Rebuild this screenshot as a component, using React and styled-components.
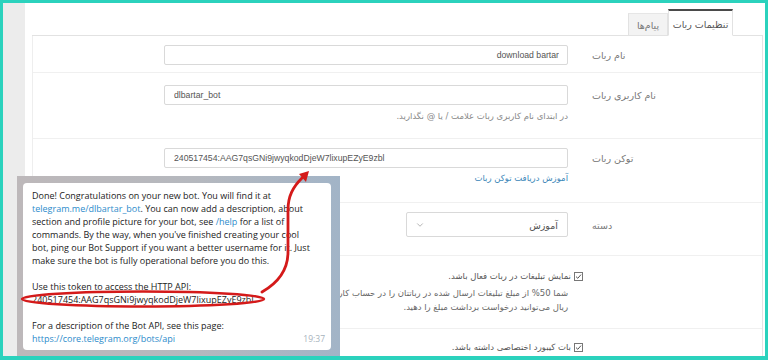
import styled, { createGlobalStyle } from "styled-components";
import { ChevronDown } from "lucide-react";

const GlobalStyle = createGlobalStyle`
  html, body {
    margin: 0;
    padding: 0;
    background: #fff;
  }
  body {
    width: 768px;
    height: 360px;
    overflow: hidden;
  }
`;

const Frame = styled.div`
  position: relative;
  box-sizing: border-box;
  width: 768px;
  height: 360px;
  display: flex;
  border: 3px solid #2bd2bd;
  border-bottom-width: 4px;
  overflow: hidden;
  background: #fff;
`;

const Sidebar = styled.div`
  width: 22px;
  flex-shrink: 0;
  background: #ececec;
`;

const Main = styled.div`
  flex: 1;
  min-width: 0;
  display: flex;
  flex-direction: column;
  padding: 6px 2px 0 7px;
`;

const Tabs = styled.div`
  direction: rtl;
  display: flex;
  align-items: flex-end;
  height: 26px;
  padding-right: 30px;
  border-bottom: 1px solid #e2e2e2;
`;

const Tab = styled.div`
  box-sizing: border-box;
  width: ${(p) => p.w}px;
  height: ${(p) => (p.active ? 27 : 23)}px;
  margin-bottom: -1px;
  display: flex;
  align-items: center;
  justify-content: center;
  padding-top: 2px;
  font: 9.5px "DejaVu Sans", sans-serif;
  color: ${(p) => (p.active ? "#555" : "#777")};
  background: ${(p) => (p.active ? "#fff" : "#f3f3f3")};
  border: 1px solid #e2e2e2;
  border-top: ${(p) => (p.active ? "2px solid #4a4a4a" : "1px solid #e6e6e6")};
  border-bottom-color: ${(p) => (p.active ? "#fff" : "#e2e2e2")};
`;

const Body = styled.div`
  direction: rtl;
  flex: 1;
  border-left: 1px solid #eee;
  border-right: 1px solid #e4e4e4;
`;

const Row = styled.div`
  display: flex;
  align-items: flex-start;
  gap: 12px;
  padding: ${(p) => p.pad};
  border-top: ${(p) => (p.first ? "none" : "1px solid #f0f0f0")};
`;

const Label = styled.div`
  box-sizing: border-box;
  width: 182px;
  flex-shrink: 0;
  padding: 1px 0 0 12px;
  text-align: left;
  font: 9.5px "DejaVu Sans", sans-serif;
  height: ${(p) => p.h || 20}px;
  line-height: ${(p) => p.h || 20}px;
  color: #777;
`;

const Control = styled.div`
  width: 404px;
  display: flex;
  flex-direction: column;
  align-items: flex-start;
`;

const Input = styled.input`
  box-sizing: border-box;
  width: 404px;
  height: 20px;
  margin: 0;
  padding: 0 8px 0 9px;
  border: 1px solid #d9d9d9;
  border-radius: 2px;
  outline: none;
  background: #fff;
  font: 8.7px "Liberation Sans", Arial, sans-serif;
  color: #555;
  direction: ${(p) => (p.ltr ? "ltr" : "rtl")};
`;

const Help = styled.div`
  margin-top: ${(p) => p.gap}px;
  font: 8.5px "DejaVu Sans", sans-serif;
  line-height: 12px;
  color: ${(p) => (p.link ? "#3a86b8" : "#888")};
`;

const Select = styled.div`
  box-sizing: border-box;
  width: 162px;
  height: 25px;
  display: flex;
  align-items: center;
  justify-content: space-between;
  padding: 1px 9px 0 8px;
  border: 1px solid #d9d9d9;
  border-radius: 2px;
  font: 9.5px "DejaVu Sans", sans-serif;
  color: #555;
`;

const Check = styled.label`
  display: flex;
  align-items: center;
  gap: 3px;
  margin-right: -15px;
  font: 8.5px "DejaVu Sans", sans-serif;
  line-height: 13px;
  color: #555;
`;

const Desc = styled.div`
  margin-top: 3px;
  font: 8.5px "DejaVu Sans", sans-serif;
  line-height: 14px;
  color: #666;
  white-space: nowrap;
`;

const TgFrame = styled.div`
  position: absolute;
  left: 14px;
  top: 173px;
  width: 323px;
  height: 190px;
  box-sizing: border-box;
  padding: 7px 0 0 6px;
  background: linear-gradient(90deg, #bdb8ba 0%, #b5b8be 55%, #a2b4c7 100%);
`;

const Bubble = styled.div`
  position: relative;
  box-sizing: border-box;
  width: 308px;
  padding: 6px 8px 5px 9px;
  background: #fff;
  border-radius: 4px;
  font-family: "Open Sans", sans-serif;
  font-size: 9px;
  line-height: 13px;
  color: #222;
`;

const Line = styled.div`
  white-space: nowrap;
  height: 13px;
`;

const Link = styled.span`
  color: #2d8ccb;
`;

const Time = styled.span`
  position: absolute;
  right: 6px;
  bottom: 5px;
  font-size: 8.5px;
  color: #a7b2bc;
`;

const Marks = styled.svg`
  position: absolute;
  left: -3px;
  top: -3px;
  pointer-events: none;
`;

const CheckBox = () => (
  <svg width="9" height="9" viewBox="0 0 9 9">
    <rect x="0.5" y="0.5" width="8" height="8" fill="#fff" stroke="#777" />
    <path d="M2 4.6 L3.8 6.3 L7 2.6" fill="none" stroke="#555" strokeWidth="1" />
  </svg>
);

export default function App() {
  return (
    <>
      <GlobalStyle />
      <Frame>
        <Sidebar />
        <Main>
          <Tabs>
            <Tab active w={65}>تنظیمات ربات</Tab>
            <Tab w={40}>پیام‌ها</Tab>
          </Tabs>
          <Body>
            <Row first pad="9px 0 7px">
              <Label>نام ربات</Label>
              <Control>
                <Input readOnly value="download bartar" />
              </Control>
            </Row>
            <Row pad="12px 0 16px">
              <Label>نام کاربری ربات</Label>
              <Control>
                <Input readOnly ltr value="dlbartar_bot" />
                <Help gap={5}>در ابتدای نام کاربری ربات علامت / یا @ نگذارید.</Help>
              </Control>
            </Row>
            <Row pad="9px 0 18px">
              <Label>توکن ربات</Label>
              <Control>
                <Input readOnly ltr value="240517454:AAG7qsGNi9jwyqkodDjeW7lixupEZyE9zbl" />
                <Help link gap={4}>آموزش دریافت توکن ربات</Help>
              </Control>
            </Row>
            <Row pad="9px 0 18px">
              <Label h={25}>دسته</Label>
              <Control>
                <Select>
                  <span>آموزش</span>
                  <ChevronDown size={10} color="#888" strokeWidth={1.5} />
                </Select>
              </Control>
            </Row>
            <Row pad="14px 0 14px">
              <Label h={13} />
              <Control>
                <Check>
                  <CheckBox />
                  نمایش تبلیغات در ربات فعال باشد.
                </Check>
                <Desc>
                  شما 50% از مبلغ تبلیغات ارسال شده در رباتتان را در حساب کاربری خود
                  <br />
                  ریال می‌توانید درخواست برداشت مبلغ را دهید.
                </Desc>
              </Control>
            </Row>
            <Row pad="12px 0 0">
              <Label h={13} />
              <Control>
                <Check>
                  <CheckBox />
                  بات کیبورد اختصاصی داشته باشد.
                </Check>
              </Control>
            </Row>
          </Body>
        </Main>

        <TgFrame>
          <Bubble>
            <Line>Done! Congratulations on your new bot. You will find it at</Line>
            <Line>
              <Link>telegram.me/dlbartar_bot</Link>. You can now add a description, about
            </Line>
            <Line>
              section and profile picture for your bot, see <Link>/help</Link> for a list of
            </Line>
            <Line>commands. By the way, when you've finished creating your cool</Line>
            <Line>bot, ping our Bot Support if you want a better username for it. Just</Line>
            <Line>make sure the bot is fully operational before you do this.</Line>
            <Line />
            <Line>Use this token to access the HTTP API:</Line>
            <Line>240517454:AAG7qsGNi9jwyqkodDjeW7lixupEZyE9zbI</Line>
            <Line />
            <Line>For a description of the Bot API, see this page:</Line>
            <Line>
              <Link>https://core.telegram.org/bots/api</Link>
            </Line>
            <Time>19:37</Time>
          </Bubble>
        </TgFrame>

        <Marks width="768" height="360" viewBox="0 0 768 360">
          <ellipse cx="143" cy="299" rx="121" ry="7.5" fill="none" stroke="#d41a1a" strokeWidth="2.5" />
          <path
            d="M262 292 C276 284 288 272 288 252 L288 210 C288 196 293 187 302 178"
            fill="none"
            stroke="#d41a1a"
            strokeWidth="2.8"
            strokeLinecap="round"
          />
          <polygon points="309,171 299,174 306,182" fill="#d41a1a" />
        </Marks>
      </Frame>
    </>
  );
}
